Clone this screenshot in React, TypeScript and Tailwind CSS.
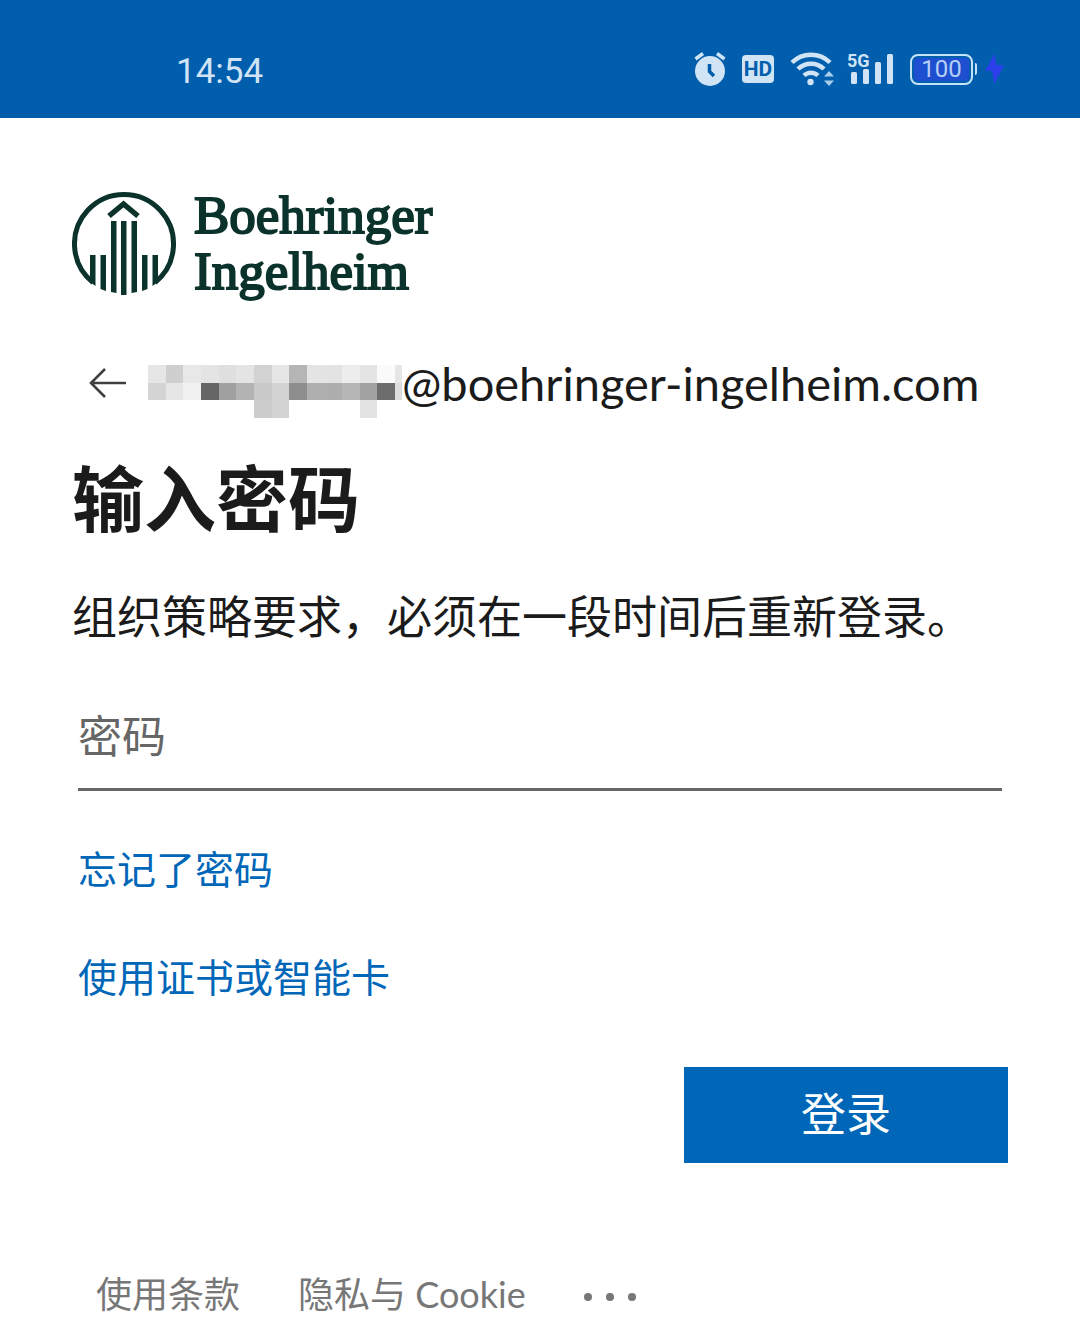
const mosaic: string[][] = [
  ['#e6e6e6', '#cfcfcf', '#e8e8e8', '#e4e4e4', '#dfdfdf', '#e4e4e4', '#d2d2d2', '#e6e6e6', '#b5b5b5', '#e4e4e4', '#e3e3e3', '#ededed', '#e4e4e4', '#fafafa', '#e6e6e6'],
  ['#d4d4d4', '#e6e6e6', '#f1f1f1', '#666666', '#a0a0a0', '#b3b3b3', '#c9c9c9', '#d3d3d3', '#8e8e8e', '#afafaf', '#aeaeae', '#b6b6b6', '#a2a2a2', '#6d6d6d', '#dddddd'],
  ['', '', '', '', '', '', '#cccccc', '#d3d3d3', '', '', '', '', '#e3e3e3', '', ''],
];
const columns = [0, 18, 35, 53, 71, 88, 106, 124, 141, 159, 177, 194, 212, 229, 247, 254];
const rows = [0, 18, 35, 53];

function HiddenName() {
  return (
    <svg className="h-[53px] w-[254px] shrink-0" viewBox="0 0 254 53" shapeRendering="crispEdges" aria-hidden="true">
      {mosaic.map((line, r) =>
        line.map((fill, c) =>
          fill ? (
            <rect key={`${r}-${c}`} x={columns[c]} y={rows[r]} width={columns[c + 1] - columns[c]} height={rows[r + 1] - rows[r]} fill={fill} />
          ) : null,
        ),
      )}
    </svg>
  );
}

function AlarmIcon() {
  return (
    <svg className="h-9 w-8" viewBox="0 0 32 36" aria-label="闹钟">
      <circle cx="16" cy="20" r="15" fill="#d0e4f5" />
      <path d="M1.500 8 9 2.500M30.500 8 23 2.500" stroke="#d0e4f5" strokeWidth="3.500" />
      <path d="M15.500 13v7.500l4.500 4.500" fill="none" stroke="#005ead" strokeWidth="3.500" />
    </svg>
  );
}

function WifiIcon() {
  return (
    <svg className="h-9 w-[45px]" viewBox="0 0 45 36" aria-label="Wi-Fi">
      <g fill="none" stroke="#d0e4f5" strokeWidth="4.500">
        <path d="M2 11.500a27 27 0 0 1 38 0" />
        <path d="M8 18a18.500 18.500 0 0 1 26 0" />
        <path d="M14 24.500a10 10 0 0 1 14 0" />
      </g>
      <circle cx="20.500" cy="31" r="3.200" fill="#d0e4f5" />
      <path d="m34 25.500 5-5.500 5 5.500ZM34 29.500l5 5.500 5-5.500Z" fill="#a9cdeb" />
    </svg>
  );
}

function StatusBar() {
  return (
    <header className="flex h-[118px] items-center justify-between bg-[#005ead] pr-[76px] pl-[176px] pt-5 font-['Roboto','Noto_Sans_CJK_SC',sans-serif] text-[#d0e4f5]">
      <time className="pt-1 text-[35px] leading-none">14:54</time>
      <div className="flex items-center">
        <AlarmIcon />
        <span className="ml-4 flex h-7 w-8 items-center justify-center rounded bg-[#d0e4f5] text-[21px] leading-none font-bold text-[#005ead]">
          HD
        </span>
        <span className="ml-4">
          <WifiIcon />
        </span>
        <div className="relative ml-3 h-9 w-12">
          <svg className="h-9 w-12" viewBox="0 0 48 36" fill="#d0e4f5" aria-hidden="true">
            <rect x="4" y="21" width="6" height="12" rx="1.500" />
            <rect x="16" y="18" width="6" height="15" rx="1.500" />
            <rect x="28" y="11" width="6" height="22" rx="1.500" />
            <rect x="40" y="3" width="6" height="30" rx="1.500" />
          </svg>
          <span className="absolute -top-0.5 left-0 text-lg leading-6 font-bold">5G</span>
        </div>
        <span className="ml-[15px] flex h-[31px] w-[63px] items-center justify-center rounded-lg border-2 border-[#c4e3f8] p-0.5">
          <span className="flex h-full w-full items-center justify-center rounded bg-[#1d4fd0] text-2xl leading-none text-[#b5cff5]">100</span>
        </span>
        <span className="ml-0.5 h-3 w-0.5 rounded-r bg-[#c4e3f8]" />
        <svg className="ml-2 h-8 w-[19px]" viewBox="0 0 20 32" aria-label="充电中">
          <path d="M10 0 0 18h7.500L9.500 32 20 12h-8Z" fill="#2b40ea" />
        </svg>
      </div>
    </header>
  );
}

function Logo() {
  return (
    <div className="flex h-[108px] items-start gap-[17px] text-[#0b332c]">
      <svg className="h-[106px] w-[105px] shrink-0" viewBox="0 0 105 106" aria-hidden="true">
        <g fill="none" stroke="currentColor" strokeWidth="5">
          <path d="M21 91.500A49.500 49.500 0 1 1 83 91.500" />
          <path d="m37 25 14.500-12 14.500 12" strokeWidth="5.500" />
        </g>
        <g fill="currentColor">
          <path d="M18 64h5.500v31L18 91ZM28.500 64H34v36l-5.500-2ZM39 30h5.500v72l-5.500-1ZM49 30h5.500v74H49ZM59.500 30H65v71l-5.500 1ZM70 64h5.500v34L70 100ZM80.500 64H86v27l-5.500 4Z" />
        </g>
      </svg>
      <div className="-mt-1 font-['Liberation_Serif',serif] text-[53px] leading-[56px] [-webkit-text-stroke:2px_currentColor]">
        <div>Boehringer</div>
        <div>Ingelheim</div>
      </div>
    </div>
  );
}

export default function App() {
  return (
    <div className="min-h-screen bg-white font-['Lato','Noto_Sans_CJK_SC',sans-serif] text-[#1b1b1b]">
      <StatusBar />
      <main className="px-[72px] pt-[73px]">
        <Logo />
        <div className="mt-12 flex h-[72px] items-center pl-4">
          <button type="button" aria-label="返回" className="mr-5 shrink-0">
            <svg className="h-8 w-10" viewBox="0 0 40 32" fill="none" stroke="#404040" strokeWidth="2.600">
              <path d="M38 16H3M17 2 3 16l14 14" />
            </svg>
          </button>
          <div className="flex items-center">
            <span className="pt-4">
              <HiddenName />
            </span>
            <span className="text-[47px] leading-[60px]">@boehringer-ingelheim.com</span>
          </div>
        </div>
        <h1 className="mt-[37px] text-[72px] leading-[84px] font-bold">输入密码</h1>
        <p className="mt-[47px] text-[45px] leading-[60px]">组织策略要求，必须在一段时间后重新登录。</p>
        <form className="pt-[45px]" onSubmit={(e) => e.preventDefault()}>
          <div className="px-1.5">
            <input
              type="password"
              aria-label="密码"
              placeholder="密码"
              className="block h-[99px] w-full border-b-[3px] border-[#666] bg-transparent pb-2 text-[44px] outline-none placeholder:text-[#666]"
            />
            <div className="mt-12 flex flex-col items-start gap-12 text-[39px] leading-[60px] text-[#0067b8]">
              <a href="#forgot">忘记了密码</a>
              <a href="#certificate">使用证书或智能卡</a>
            </div>
          </div>
          <div className="mt-[60px] flex justify-end">
            <button type="submit" className="h-24 w-[324px] bg-[#0067b8] text-[45px] text-white">登录</button>
          </div>
        </form>
      </main>
      <footer className="mt-[101px] flex h-[60px] items-center gap-[58px] pl-24 text-[36px] leading-[60px] text-[#777]">
        <a href="#terms">使用条款</a>
        <a href="#privacy" className="whitespace-nowrap">隐私与 Cookie</a>
        <button type="button" aria-label="更多选项">
          <svg className="h-5 w-[52px]" viewBox="0 0 52 20" fill="#777">
            <circle cx="4" cy="13" r="4" />
            <circle cx="26" cy="13" r="4" />
            <circle cx="48" cy="13" r="4" />
          </svg>
        </button>
      </footer>
    </div>
  );
}
